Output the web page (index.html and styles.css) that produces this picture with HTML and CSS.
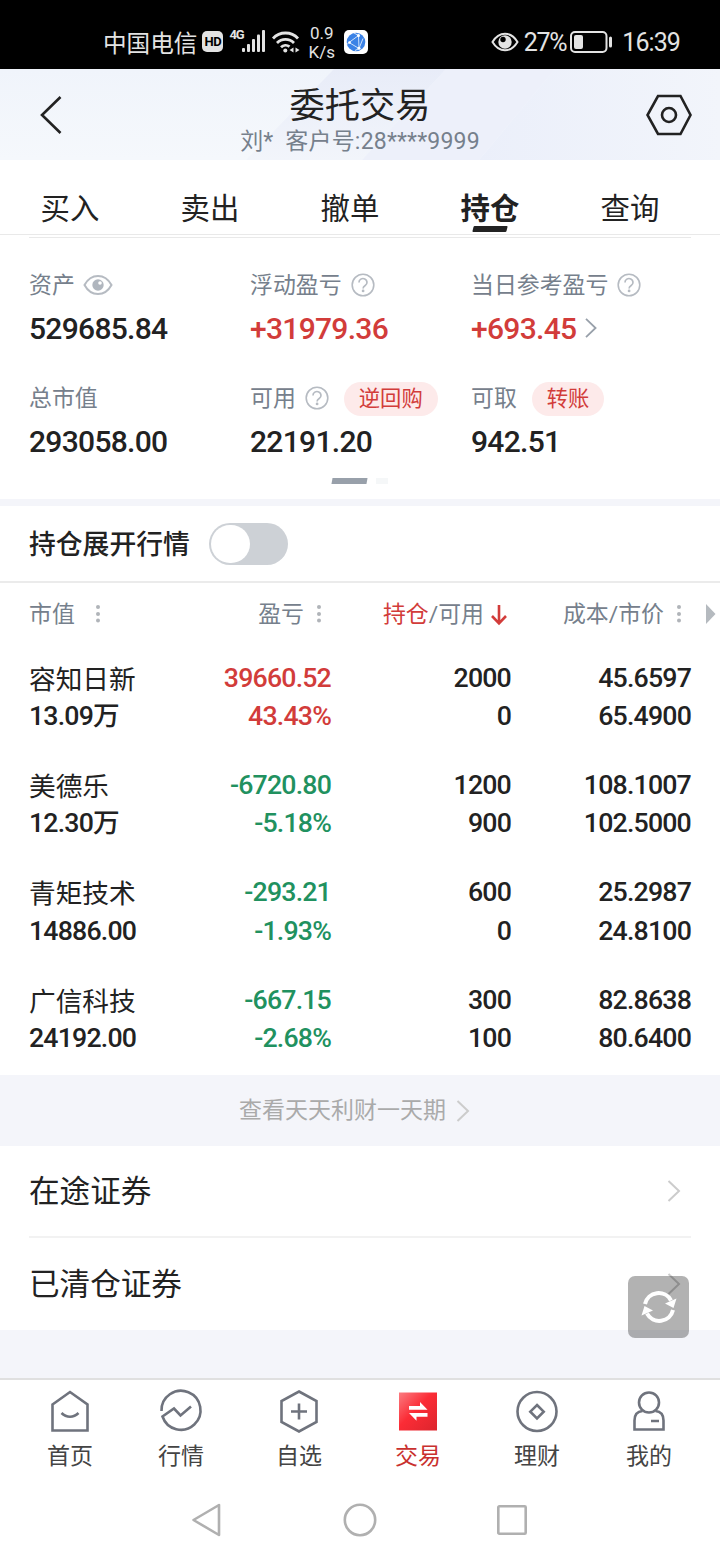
FILE: index.html
```html
<!DOCTYPE html>
<html lang="zh-CN">
<head>
    <meta charset="UTF-8">
    <meta name="viewport" content="width=device-width, initial-scale=1.0">
    <title>委托交易</title>
    <link rel="stylesheet" href="styles.css">
</head>
<body>
    <!-- shared icons -->
    <svg class="sprite" width="0" height="0">
        <symbol id="help" viewBox="0 0 24 24">
            <circle cx="12" cy="12" r="10.8" fill="none" stroke="#b6bbc2" stroke-width="1.6"/>
            <path d="M8 9.500a4 3.800 0 1 1 6.200 3c-1.500 1-2.100 1.400-2.100 2.900" fill="none" stroke="#b6bbc2" stroke-width="1.7"/>
            <circle cx="12.100" cy="17.900" r="1.400" fill="#b6bbc2"/>
        </symbol>
        <symbol id="dots" viewBox="0 0 24 24">
            <circle cx="12" cy="5" r="2" fill="#b0b4b9"/>
            <circle cx="12" cy="12" r="2" fill="#b0b4b9"/>
            <circle cx="12" cy="18.600" r="2" fill="#b0b4b9"/>
        </symbol>
        <symbol id="arrow" viewBox="0 0 14 22">
            <path d="M1.500 1L12 11 1.500 21" fill="none" stroke="currentColor" stroke-width="2"/>
        </symbol>
    </svg>

    <div class="status-bar">
        <div class="status-left">
            <span class="carrier">中国电信</span>
            <span class="hd">HD</span>
            <span class="net">4G</span>
            <svg class="signal" width="24" height="23" viewBox="0 0 24 23" fill="#e3e3e3">
                <rect x="0" y="18" width="3" height="4" rx="1"/>
                <rect x="5" y="14" width="3" height="8" rx="1"/>
                <rect x="10" y="9" width="3" height="13" rx="1"/>
                <rect x="15" y="4.500" width="3" height="17.500" rx="1"/>
                <rect x="20" y="0" width="3" height="22" rx="1"/>
            </svg>
            <svg class="wifi" width="28" height="24" viewBox="0 0 28 24" fill="none" stroke="#e3e3e3" stroke-width="2.800">
                <path d="M1 8.500a17 17 0 0 1 25 0M5 13a12 12 0 0 1 17 0M9 17.200a6.500 6.500 0 0 1 8.500-.5"/>
                <circle cx="13.300" cy="20.500" r="2" fill="#e3e3e3" stroke="none"/>
                <path d="M21.500 17.500v5l-4-2.500zM23.500 17.500v5l4-2.500z" fill="#e3e3e3" stroke="none"/>
            </svg>
            <span class="speed">0.9<br>K/s</span>
            <svg class="app-badge" width="24" height="24" viewBox="0 0 24 24">
                <rect width="24" height="24" rx="5" fill="#fff"/>
                <circle cx="12" cy="12" r="9.300" fill="#3b82e6"/>
                <path d="M14.500 5.500L5 12.500 15 18.500zM14.500 5.500L10 3M15 18.500l4-10M5 12.500l-2 2M15 18.500l-4 2" fill="none" stroke="#cfe2fb" stroke-width="1"/>
                <circle cx="14.500" cy="5.500" r="1.500" fill="#fff"/><circle cx="5.500" cy="12.500" r="1.300" fill="#fff"/><circle cx="15" cy="18.300" r="1.500" fill="#fff"/>
            </svg>
        </div>
        <div class="status-right">
            <svg class="status-eye" width="28" height="20" viewBox="0 0 28 20">
                <path d="M1.500 10C8-1 20-1 26.500 10 20 21 8 21 1.500 10z" fill="none" stroke="#e3e3e3" stroke-width="2"/>
                <circle cx="14" cy="10" r="6.700" fill="#e3e3e3"/>
                <circle cx="12" cy="7.500" r="2.700" fill="#000"/>
            </svg>
            <span class="percent">27%</span>
            <svg class="battery" width="43" height="22" viewBox="0 0 43 22">
                <rect x="1" y="1" width="35.500" height="20" rx="4" fill="none" stroke="#e3e3e3" stroke-width="2"/>
                <rect x="4" y="4" width="9" height="14" rx="2" fill="#e3e3e3"/>
                <rect x="39" y="5.500" width="3" height="11" rx="1.500" fill="#e3e3e3"/>
            </svg>
            <span class="clock">16:39</span>
        </div>
    </div>

    <header class="header">
        <svg class="header-bg" width="720" height="91" viewBox="0 0 720 91">
            <defs>
                <linearGradient id="fade" x1="0" y1="0" x2="0" y2="1">
                    <stop offset="0" stop-color="#e8ecf8"/>
                    <stop offset="1" stop-color="#f2f5fb"/>
                </linearGradient>
                <linearGradient id="fade2" x1="0" y1="0" x2="1" y2="0">
                    <stop offset="0" stop-color="#ebeffa"/>
                    <stop offset="1" stop-color="#f2f5fb"/>
                </linearGradient>
            </defs>
            <path d="M334 0H446L362 91H246z" fill="url(#fade)"/>
            <path d="M446 0H555L479 91H362z" fill="#edf0fa"/>
            <path d="M555 0H720V91H479z" fill="url(#fade2)"/>
        </svg>
        <svg class="back" width="24" height="40" viewBox="0 0 24 40"><path d="M21.500 2L3 20l18.500 18" fill="none" stroke="#222" stroke-width="2.600"/></svg>
        <div class="header-title">
            <h1>委托交易</h1>
            <p>刘*&nbsp; 客户号:28****9999</p>
        </div>
        <svg class="settings" width="46" height="42" viewBox="0 0 46 42" fill="none" stroke="#222" stroke-width="2.600">
            <path d="M12 2H34.500L44.500 21 34.500 40H12L1.500 21z"/>
            <circle cx="23" cy="21" r="7"/>
        </svg>
    </header>

    <nav class="tabs">
        <a>买入</a>
        <a>卖出</a>
        <a>撤单</a>
        <a class="active">持仓</a>
        <a>查询</a>
    </nav>

    <section class="summary">
        <div class="summary-grid">
            <div class="cell">
                <div class="label"><span>资产</span>
                    <svg class="eye" width="30" height="22" viewBox="0 0 30 22">
                        <path d="M1.500 11C8-1 22-1 28.500 11 22 23 8 23 1.500 11z" fill="none" stroke="#b6bbc2" stroke-width="2"/>
                        <circle cx="15" cy="11" r="5.700" fill="#b0b6be"/>
                        <circle cx="17" cy="9" r="1.800" fill="#fff"/>
                    </svg>
                </div>
                <div class="value">529685.84</div>
            </div>
            <div class="cell">
                <div class="label"><span>浮动盈亏</span><svg class="help" width="24" height="24"><use href="#help"/></svg></div>
                <div class="value up">+31979.36</div>
            </div>
            <div class="cell">
                <div class="label"><span>当日参考盈亏</span><svg class="help" width="24" height="24"><use href="#help"/></svg></div>
                <div class="value up">+693.45 <svg class="more" width="14" height="20"><use href="#arrow"/></svg></div>
            </div>
            <div class="cell">
                <div class="label"><span>总市值</span></div>
                <div class="value">293058.00</div>
            </div>
            <div class="cell">
                <div class="label"><span>可用</span><svg class="help" width="24" height="24"><use href="#help"/></svg><b class="pill">逆回购</b></div>
                <div class="value">22191.20</div>
            </div>
            <div class="cell">
                <div class="label"><span>可取</span><b class="pill">转账</b></div>
                <div class="value">942.51</div>
            </div>
        </div>
        <div class="pager"><i class="on"></i><i></i></div>
    </section>

    <div class="expand-row">
        <span>持仓展开行情</span>
        <div class="switch"><i></i></div>
    </div>

    <section class="holdings">
        <div class="holdings-head">
            <div class="first"><span>市值</span><svg width="24" height="24"><use href="#dots"/></svg></div>
            <div><span>盈亏</span><svg width="24" height="24"><use href="#dots"/></svg></div>
            <div><span><em class="red">持仓</em>/可用</span>
                <svg width="24" height="24" viewBox="0 0 24 24"><path d="M12 3v18M5 14l7 7.300 7-7.300" fill="none" stroke="#d23c3a" stroke-width="2.600"/></svg>
            </div>
            <div><span>成本/市价</span><svg width="24" height="24"><use href="#dots"/></svg></div>
            <svg class="scroll-next" width="10" height="20" viewBox="0 0 10 20"><path d="M0 0l9.500 10L0 20z" fill="#b5babf"/></svg>
        </div>
        <div class="stock">
            <div class="first"><b>容知日新</b>13.09万</div>
            <div class="up">39660.52<br>43.43%</div>
            <div>2000<br>0</div>
            <div>45.6597<br>65.4900</div>
        </div>
        <div class="stock">
            <div class="first"><b>美德乐</b>12.30万</div>
            <div class="down">-6720.80<br>-5.18%</div>
            <div>1200<br>900</div>
            <div>108.1007<br>102.5000</div>
        </div>
        <div class="stock">
            <div class="first"><b>青矩技术</b>14886.00</div>
            <div class="down">-293.21<br>-1.93%</div>
            <div>600<br>0</div>
            <div>25.2987<br>24.8100</div>
        </div>
        <div class="stock">
            <div class="first"><b>广信科技</b>24192.00</div>
            <div class="down">-667.15<br>-2.68%</div>
            <div>300<br>100</div>
            <div>82.8638<br>80.6400</div>
        </div>
    </section>

    <div class="promo"><span>查看天天利财一天期</span><svg width="14" height="22"><use href="#arrow"/></svg></div>

    <section class="links">
        <a><span>在途证券</span><svg width="14" height="22"><use href="#arrow"/></svg></a>
        <a><span>已清仓证券</span><svg width="14" height="22"><use href="#arrow"/></svg></a>
        <!-- floating refresh button -->
        <div class="refresh">
            <svg width="36" height="34" viewBox="0 0 36 34">
                <path d="M4 14A14 14 0 0 1 30 10.500M32 20A14 14 0 0 1 6 23.500" fill="none" stroke="#fff" stroke-width="4"/>
                <path d="M35.500 8.500L32.500 18 24 13.500zM.5 25.500L3.500 16 12 20.500z" fill="#fff"/>
            </svg>
        </div>
    </section>

    <nav class="tabbar">
        <a>
            <svg width="44" height="44" viewBox="0 0 44 44" fill="none" stroke="#6f737d" stroke-width="2.600">
                <path d="M4.500 15.500L22 3l17.500 12.500V41.500h-35z"/>
                <path d="M13.500 24c5 5 12 5 17 0"/>
            </svg>
            首页
        </a>
        <a>
            <svg width="44" height="44" viewBox="0 0 44 44" fill="none" stroke="#6f737d" stroke-width="2.600">
                <path d="M2.500 22A19.500 19.500 0 1 1 3.500 27.500L15 19.500l6.500 7L32 17.500"/>
            </svg>
            行情
        </a>
        <a>
            <svg width="44" height="44" viewBox="0 0 44 44" fill="none" stroke="#6f737d" stroke-width="2.600">
                <path d="M22 2.500L39.500 12V33L22 42.500 4.500 33V12z"/>
                <path d="M22 14.500v16M14 22.500h16"/>
            </svg>
            自选
        </a>
        <a class="active">
            <svg width="44" height="44" viewBox="0 0 44 44">
                <defs>
                    <linearGradient id="trade" x1="0" y1="0" x2="1" y2="1">
                        <stop offset="0" stop-color="#fb7c81"/>
                        <stop offset=".45" stop-color="#fb2c36"/>
                        <stop offset="1" stop-color="#dc252d"/>
                    </linearGradient>
                </defs>
                <rect x="3" y="3.500" width="38" height="38" fill="url(#trade)"/>
                <path d="M13 17h11v-4l7.500 7.800H13zM31.500 24H13l7.500 7.800V27.800h11z" fill="#fff"/>
            </svg>
            交易
        </a>
        <a>
            <svg width="44" height="44" viewBox="0 0 44 44" fill="none" stroke="#6f737d" stroke-width="2.600">
                <circle cx="22" cy="22.500" r="19.500"/>
                <path d="M22 16l6.700 6.700L22 29.400l-6.700-6.700z"/>
            </svg>
            理财
        </a>
        <a>
            <svg width="44" height="44" viewBox="0 0 44 44" fill="none" stroke="#6f737d" stroke-width="2.600">
                <circle cx="22" cy="13.500" r="10"/>
                <path d="M15.500 22C10 22.500 7.500 26 7.500 31.500V40.500h29V31.500C36.500 26 34 22.500 28.500 22M24 32h8"/>
            </svg>
            我的
        </a>
    </nav>

    <div class="system-nav">
        <svg width="30" height="34" viewBox="0 0 30 34"><path d="M28 2V32L2.500 17z" fill="none" stroke="#b0b0b0" stroke-width="2.600" stroke-linejoin="round"/></svg>
        <svg width="34" height="34" viewBox="0 0 34 34"><circle cx="18" cy="17" r="15.200" fill="none" stroke="#b0b0b0" stroke-width="2.600"/></svg>
        <svg width="30" height="34" viewBox="0 0 30 34"><rect x="1.300" y="3.300" width="27.400" height="27.400" rx="1" fill="none" stroke="#b0b0b0" stroke-width="2.600"/></svg>
    </div>
</body>
</html>
```
FILE: styles.css
```css
/* General styling */
* {
    box-sizing: border-box;
}

body {
    margin: 0;
    width: 720px;
    height: 1560px;
    overflow: hidden;
    background: #fff;
    color: #222;
    font-family: Roboto, "Noto Sans CJK SC", sans-serif;
}

svg {
    display: block;
    flex: none;
    overflow: visible;
}

.sprite {
    position: absolute;
}

/* Phone status bar */
.status-bar {
    display: flex;
    justify-content: space-between;
    height: 69px;
    padding: 16px 40px 0 103px;
    background: #000;
    color: #e3e3e3;
}

.status-left,
.status-right {
    display: flex;
    align-items: center;
    height: 53px;
}

.carrier {
    padding-top: 2px;
    font-size: 23.6px;
    line-height: 30px;
}

.hd {
    width: 21px;
    height: 21px;
    margin: -2px 0 0 5px;
    border-radius: 5px;
    background: #e3e3e3;
    color: #000;
    font-size: 13px;
    font-weight: 700;
    line-height: 21px;
    letter-spacing: -0.5px;
    text-align: center;
}

.net {
    margin: -16px 0 0 6px;
    font-size: 13px;
    font-weight: 700;
    letter-spacing: -1px;
}

.signal {
    margin: -2px 0 0 -2px;
}

.wifi {
    margin: -2px 0 0 6px;
}

.speed {
    width: 28px;
    margin-left: 8px;
    font-size: 17px;
    line-height: 19px;
    text-align: center;
}

.app-badge {
    margin: -2px 0 0 8px;
}

.status-eye {
    margin-top: -2px;
}

.percent {
    margin-left: 5px;
    font-size: 25px;
    letter-spacing: -1.3px;
}

.battery {
    margin: -2px 0 0 4px;
}

.clock {
    margin-left: 9px;
    font-size: 25px;
    letter-spacing: -0.9px;
}

/* Page header */
.header {
    position: relative;
    display: flex;
    justify-content: space-between;
    align-items: center;
    height: 91px;
    padding: 0 28px 0 39px;
    background: linear-gradient(#f0f4fb, #f5f8fc);
}

.header-bg {
    position: absolute;
    top: 0;
    left: 0;
}

.back,
.settings,
.header-title {
    position: relative;
}

.header-title {
    margin-left: 11px;
    padding-top: 14px;
    text-align: center;
}

.header-title h1 {
    margin: 0;
    font-size: 35.2px;
    font-weight: 400;
    line-height: 40px;
}

.header-title p {
    margin: 0;
    color: #76808c;
    font-size: 23px;
    letter-spacing: 0.2px;
    line-height: 32px;
}

/* Trade tabs */
.tabs {
    display: flex;
    height: 75px;
    border-bottom: 1px solid #e9e9e9;
}

.tabs a {
    width: 140px;
    flex: none;
    padding-top: 28px;
    font-size: 29.4px;
    line-height: 42px;
    text-align: center;
}

.tabs .active {
    font-weight: 700;
}

.tabs .active::after {
    content: "";
    display: block;
    width: 34px;
    height: 6px;
    margin: -4px auto 0;
    border-radius: 1px;
    background: #222;
    transform: skewX(-14deg);
}

/* Account summary */
.summary {
    height: 271px;
    padding: 2px 29px 0;
    border-bottom: 7px solid #f4f5fa;
}

.summary-grid {
    display: grid;
    grid-template-columns: 221px 221px 220px;
    row-gap: 32px;
    padding-top: 29px;
    border-top: 1px solid #e9e9e9;
}

.cell {
    height: 81px;
}

.label {
    display: flex;
    align-items: center;
    height: 36px;
    color: #76808c;
    font-size: 22.9px;
}

.label span {
    padding-bottom: 4px;
}

.eye {
    margin-left: 8px;
}

.help {
    margin-left: 9px;
}

.pill {
    margin: 1px 0 0 15px;
    padding: 0 15px;
    border-radius: 17px;
    background: #fdeaea;
    color: #d23c3a;
    font-size: 21.3px;
    font-weight: 400;
    line-height: 34px;
}

.value {
    display: flex;
    align-items: center;
    height: 40px;
    margin-top: 5px;
    font-size: 30px;
    font-weight: 500;
    letter-spacing: -0.7px;
}

.more {
    margin-left: 8px;
    color: #98a0aa;
}

.up,
.red {
    color: #d23c3a;
}

.red {
    font-style: normal;
}

.down {
    color: #21915f;
}

.pager {
    display: flex;
    justify-content: center;
    gap: 9px;
    margin-top: 17px;
}

.pager i {
    width: 12px;
    height: 6px;
    background: #f5f7f8;
}

.pager .on {
    width: 35px;
    background: #98a0aa;
    transform: skewX(-10deg);
}

/* Expand quotes switch */
.expand-row {
    display: flex;
    align-items: center;
    height: 77px;
    padding-left: 29px;
    border-bottom: 2px solid #ebebeb;
    font-size: 26.8px;
    font-weight: 500;
}

.expand-row span {
    padding-bottom: 3px;
}

.switch {
    width: 79px;
    height: 42px;
    margin-left: 19px;
    padding: 2px;
    border-radius: 21px;
    background: #cdd1d6;
}

.switch i {
    display: block;
    width: 39px;
    height: 38px;
    border-radius: 20px;
    background: #fff;
}

/* Holdings table */
.holdings {
    height: 492px;
}

.holdings-head,
.stock {
    display: grid;
    grid-template-columns: 122px 180px 180px 180px;
    padding-left: 29px;
}

.holdings-head {
    grid-template-columns: 122px 180px 180px 180px 15px 10px;
    height: 62.7px;
    align-items: center;
    color: #76808c;
    font-size: 22.9px;
}

.holdings-head div {
    display: flex;
    align-items: center;
    justify-content: flex-end;
    gap: 3px;
}

.holdings-head span {
    padding-bottom: 4px;
}

.holdings-head .first {
    justify-content: flex-start;
    gap: 11px;
}

.scroll-next {
    grid-column: 6;
}

.stock {
    height: 107.3px;
    padding-top: 13px;
    font-size: 26.7px;
    font-weight: 500;
    letter-spacing: -0.8px;
    line-height: 38.4px;
    text-align: right;
}

.stock .first {
    text-align: left;
}

.stock b {
    display: block;
    height: 38.4px;
    padding-top: 2px;
    font-weight: 400;
    letter-spacing: 0;
}

/* Promo strip */
.promo {
    display: flex;
    align-items: center;
    justify-content: center;
    gap: 10px;
    height: 71px;
    padding-right: 11px;
    background: #f4f5fa;
    color: #aaa;
    font-size: 23px;
}

.promo span {
    padding-bottom: 5px;
}

.promo svg,
.links svg {
    color: #ccc;
}

/* Links */
.links {
    position: relative;
    height: 232px;
    padding: 0 29px;
    border-bottom: 48px solid #f4f5fa;
}

.links a {
    display: flex;
    align-items: center;
    justify-content: space-between;
    height: 92px;
    padding-right: 10px;
    font-size: 30.6px;
}

.links a span {
    padding-bottom: 4px;
}

.links a:first-child {
    border-bottom: 2px solid #f2f2f2;
}

.refresh {
    position: absolute;
    right: 31px;
    top: 130px;
    display: flex;
    align-items: center;
    justify-content: center;
    width: 61px;
    height: 62px;
    border-radius: 7px;
    background: rgba(0, 0, 0, 0.3);
}

/* Bottom tab bar */
.tabbar {
    display: grid;
    grid-template-columns: 112px 110px 126px 112px 126px 98px;
    height: 102px;
    padding: 9px 0 0 14px;
    border-top: 2px solid #e0e0e0;
}

.tabbar a {
    display: flex;
    flex-direction: column;
    align-items: center;
    gap: 3px;
    color: #444;
    font-size: 23px;
    line-height: 42px;
}

.tabbar .active {
    color: #c9302e;
}

/* Android navigation keys */
.system-nav {
    display: flex;
    align-items: center;
    justify-content: space-between;
    height: 80px;
    padding: 0 193px 0 191px;
}
```
